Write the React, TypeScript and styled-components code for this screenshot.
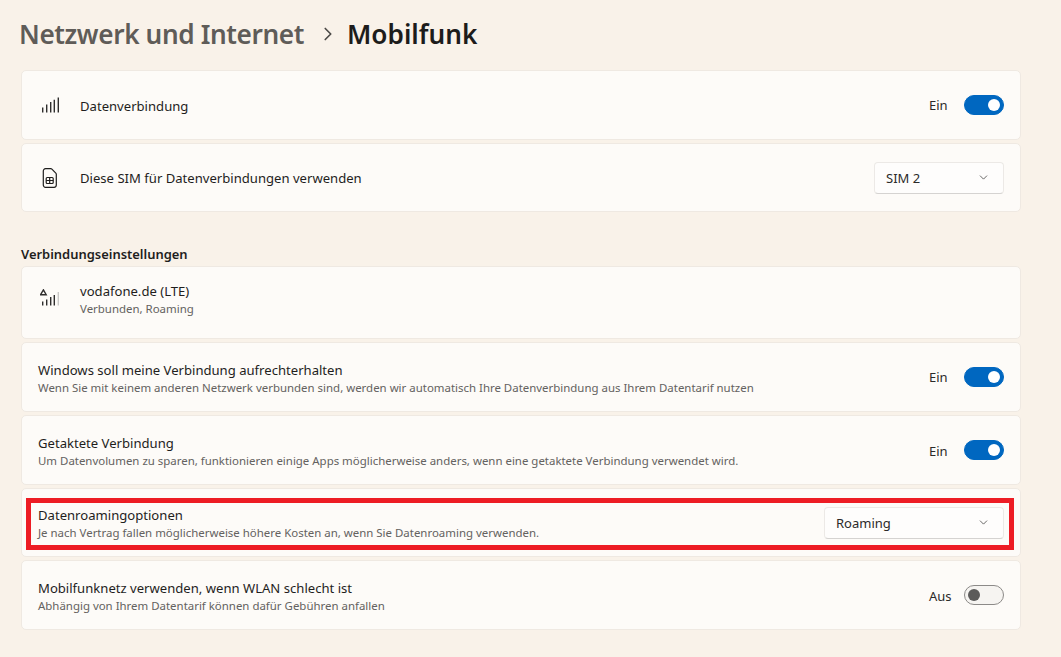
import React from "react";
import styled, { createGlobalStyle } from "styled-components";
import { ChevronDown, ChevronRight } from "lucide-react";

const GlobalStyle = createGlobalStyle`
  html, body {
    margin: 0;
    padding: 0;
    background: #f9f2e9;
  }
  * {
    box-sizing: border-box;
  }
`;

const Page = styled.div`
  width: 1061px;
  height: 657px;
  overflow: hidden;
  background: #f9f2e9;
  padding: 0 40px 0 21px;
  font-family: "Noto Sans", "Open Sans", sans-serif;
  color: #1d1c1b;
`;

const Breadcrumb = styled.h1`
  margin: 0 0 0 -2px;
  height: 70px;
  padding: 0 0 3px 0;
  display: flex;
  align-items: center;
  font-size: 26.2px;
  font-weight: 600;
`;

const Parent = styled.span`
  color: #5f5c58;
  letter-spacing: -0.38px;
`;

const Separator = styled.span`
  display: flex;
  margin: 0 8px 0 13px;
  color: #4b4946;
`;

const Stack = styled.div`
  display: flex;
  flex-direction: column;
  gap: 3px;
`;

const Card = styled.div<{ $height: number; $top?: boolean }>`
  position: relative;
  height: ${(p) => p.$height}px;
  display: flex;
  align-items: ${(p) => (p.$top ? "flex-start" : "center")};
  padding: ${(p) => (p.$top ? "13px 16px 0 16px" : "0 16px 0 16px")};
  background: #fdfbf8;
  border: 1px solid #efe9e2;
  border-radius: 5px;
`;

const IconSlot = styled.div<{ $drop?: number }>`
  width: 42px;
  flex: none;
  display: flex;
  align-items: center;
  padding-left: 2px;
  margin-top: ${(p) => p.$drop ?? 0}px;
`;

const Texts = styled.div<{ $flush?: boolean }>`
  flex: 1;
  min-width: 0;
  display: flex;
  flex-direction: column;
  padding-top: ${(p) => (p.$flush ? 0 : 2)}px;
`;

const Title = styled.div`
  font-size: 13.1px;
  line-height: 18px;
  color: #1f1e1d;
`;

const Hint = styled.div`
  font-size: 11.45px;
  line-height: 16px;
  margin-top: 1px;
  color: #646260;
`;

const SectionLabel = styled.h2`
  margin: 0;
  padding-top: 33px;
  height: 54px;
  font-size: 12.95px;
  line-height: 18px;
  font-weight: 600;
  color: #1f1e1d;
`;

const ToggleLabel = styled.span<{ $low?: boolean }>`
  width: 35px;
  flex: none;
  padding-top: ${(p) => (p.$low ? 2 : 0)}px;
  font-size: 13px;
  color: #2b2a29;
`;

const Toggle = styled.span<{ $on: boolean }>`
  width: 40px;
  height: 20px;
  flex: none;
  display: flex;
  align-items: center;
  justify-content: ${(p) => (p.$on ? "flex-end" : "flex-start")};
  padding: 0 3px;
  border-radius: 10px;
  background: ${(p) => (p.$on ? "#0067c0" : "#f6f4f1")};
  border: 1px solid ${(p) => (p.$on ? "#0067c0" : "#8c8a88")};
`;

const Knob = styled.span<{ $on: boolean }>`
  width: 12px;
  height: 12px;
  border-radius: 50%;
  background: ${(p) => (p.$on ? "#ffffff" : "#5c5b5a")};
`;

const Select = styled.div<{ $width: number }>`
  width: ${(p) => p.$width}px;
  height: 32px;
  flex: none;
  display: flex;
  align-items: center;
  justify-content: space-between;
  padding: 0 13px 0 11px;
  background: #fefdfc;
  border: 1px solid #ece9e6;
  border-bottom-color: #d5d3d1;
  border-radius: 4px;
  font-size: 13px;
  color: #2b2a29;
`;

const Highlight = styled.div`
  position: absolute;
  left: 4px;
  top: 9px;
  width: 988px;
  height: 52px;
  border: 5px solid #ed1c24;
  pointer-events: none;
`;

const SignalIcon = () => (
  <svg width="20" height="16" viewBox="0 0 20 16" fill="none" stroke="#2f2e2d" strokeWidth="1.4">
    <path d="M2.700 15.500v-5M6.700 15.500V7.500M10.700 15.500V5M14.300 15.500V2.800M18.300 15.500V.500" />
  </svg>
);

const SimIcon = () => (
  <svg width="20" height="20" viewBox="0 0 20 20" fill="none" stroke="#1f1e1d" strokeWidth="1.200">
    <path d="M5.500.700h5.200c.5 0 .9.200 1.200.500l3.900 3.900c.3.300.5.700.5 1.200v10.800c0 1.100-.9 2.200-2.200 2.200H5.500c-1.200 0-2.200-1.100-2.200-2.200V2.900c0-1.200 1-2.200 2.200-2.200z" />
    <rect x="6.200" y="9.500" width="7" height="6" rx="1" />
    <path d="M9.700 9.500v6M6.200 12.500h7" />
  </svg>
);

const RoamingIcon = () => (
  <svg width="20" height="17" viewBox="0 0 20 17" fill="none" stroke="#2f2e2d" strokeWidth="1.400">
    <path d="M3.400.900 6.200 5.700H.6z" />
    <path d="M2.700 16.500v-4M6.700 16.500v-6M10.700 16.500V8M14.300 16.500V6" />
    <path d="M18.300 16.500V3" stroke="#c9c8c6" />
  </svg>
);

const Switch = ({ on, low }: { on: boolean; low?: boolean }) => (
  <>
    <ToggleLabel $low={low}>{on ? "Ein" : "Aus"}</ToggleLabel>
    <Toggle $on={on}>
      <Knob $on={on} />
    </Toggle>
  </>
);

const Dropdown = ({ value, width }: { value: string; width: number }) => (
  <Select $width={width}>
    {value}
    <ChevronDown size={13} strokeWidth={1.400} color="#3a3938" />
  </Select>
);

export default function App() {
  return (
    <Page>
      <GlobalStyle />
      <Breadcrumb>
        <Parent>Netzwerk und Internet</Parent>
        <Separator>
          <ChevronRight size={22} strokeWidth={1.800} />
        </Separator>
        Mobilfunk
      </Breadcrumb>

      <Stack>
        <Card $height={70}>
          <IconSlot>
            <SignalIcon />
          </IconSlot>
          <Texts>
            <Title>Datenverbindung</Title>
          </Texts>
          <Switch on />
        </Card>
        <Card $height={69}>
          <IconSlot>
            <SimIcon />
          </IconSlot>
          <Texts $flush>
            <Title>Diese SIM für Datenverbindungen verwenden</Title>
          </Texts>
          <Dropdown value="SIM 2" width={130} />
        </Card>
      </Stack>

      <SectionLabel>Verbindungseinstellungen</SectionLabel>

      <Stack>
        <Card $height={73} $top>
          <IconSlot $drop={9}>
            <RoamingIcon />
          </IconSlot>
          <Texts>
            <Title>vodafone.de (LTE)</Title>
            <Hint>Verbunden, Roaming</Hint>
          </Texts>
        </Card>
        <Card $height={70}>
          <Texts>
            <Title>Windows soll meine Verbindung aufrechterhalten</Title>
            <Hint>Wenn Sie mit keinem anderen Netzwerk verbunden sind, werden wir automatisch Ihre Datenverbindung aus Ihrem Datentarif nutzen</Hint>
          </Texts>
          <Switch on />
        </Card>
        <Card $height={70}>
          <Texts>
            <Title>Getaktete Verbindung</Title>
            <Hint>Um Datenvolumen zu sparen, funktionieren einige Apps möglicherweise anders, wenn eine getaktete Verbindung verwendet wird.</Hint>
          </Texts>
          <Switch on low />
        </Card>
        <Card $height={69}>
          <Texts>
            <Title>Datenroamingoptionen</Title>
            <Hint>Je nach Vertrag fallen möglicherweise höhere Kosten an, wenn Sie Datenroaming verwenden.</Hint>
          </Texts>
          <Dropdown value="Roaming" width={180} />
          <Highlight />
        </Card>
        <Card $height={70}>
          <Texts>
            <Title>Mobilfunknetz verwenden, wenn WLAN schlecht ist</Title>
            <Hint>Abhängig von Ihrem Datentarif können dafür Gebühren anfallen</Hint>
          </Texts>
          <Switch on={false} low />
        </Card>
      </Stack>
    </Page>
  );
}
